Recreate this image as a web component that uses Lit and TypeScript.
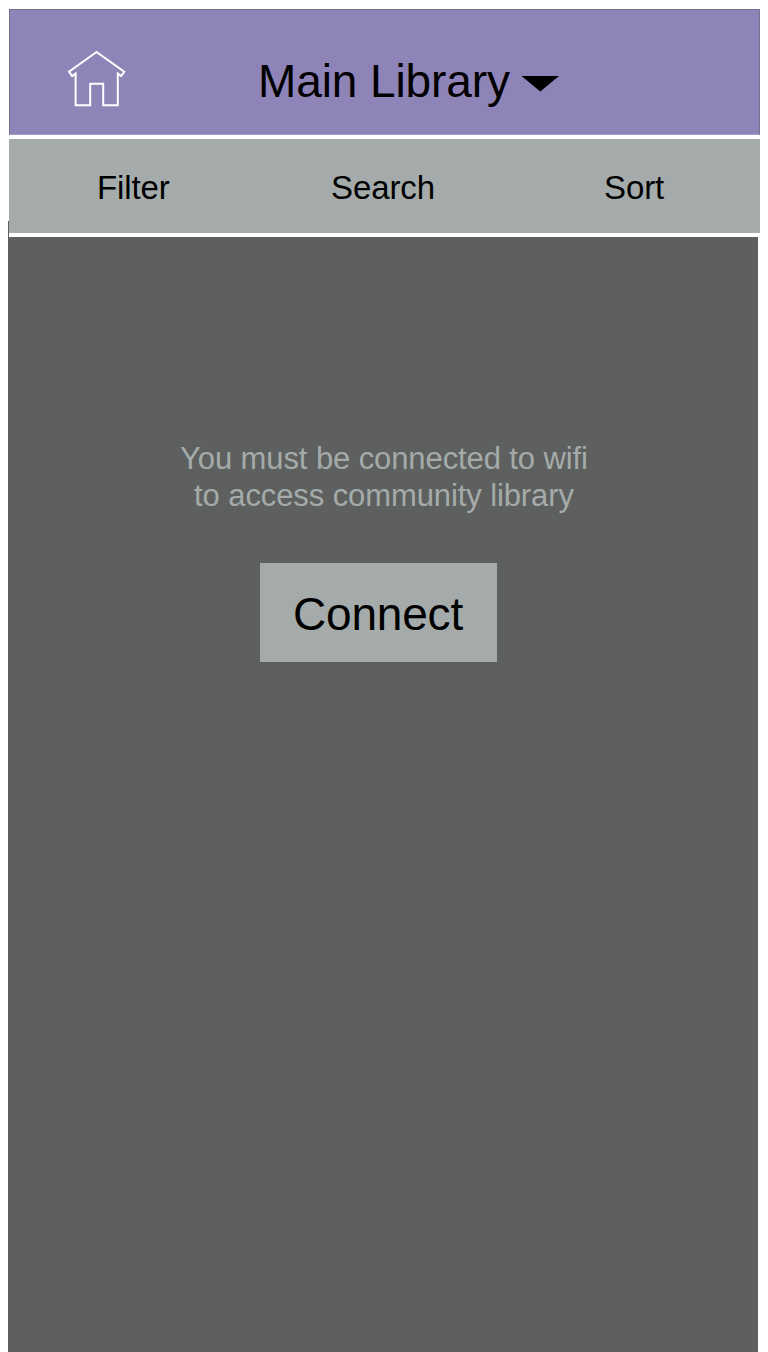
import { LitElement, html, css } from "lit";
import { customElement } from "lit/decorators.js";

@customElement("app-root")
export class AppRoot extends LitElement {
  static styles = css`
    :host {
      display: block;
      box-sizing: border-box;
      height: 1352px;
      padding-top: 9px;
      overflow: hidden;
      background: #fff;
      color: #000;
      font-family: "Liberation Sans", Arial, sans-serif;
    }
    .header {
      box-sizing: border-box;
      display: flex;
      width: 751px;
      height: 126px;
      margin-left: 9px;
      padding: 38px 0 0 57px;
      background: #8f84b7;
      border: 1px solid #77718f;
      border-bottom-color: #a69dc4;
    }
    .home {
      flex: none;
      width: 62px;
      height: 62px;
    }
    .title {
      display: flex;
      margin: 7px 0 0 129px;
      font-size: 46px;
      line-height: 53px;
      letter-spacing: -0.1px;
      white-space: nowrap;
    }
    .caret {
      width: 38px;
      height: 18px;
      margin: 20px 0 0 11px;
    }
    .toolbar {
      position: relative;
      z-index: 1;
      box-sizing: border-box;
      display: grid;
      grid-template-columns: 234px 273px 1fr;
      width: 751px;
      height: 102px;
      margin-left: 9px;
      padding-left: 88px;
      background: #a4abaa;
      border-top: 4px solid #fff;
      border-bottom: 4px solid #fff;
      font-size: 33px;
      line-height: 97px;
      letter-spacing: -0.1px;
    }
    .panel {
      display: flex;
      flex-direction: column;
      align-items: center;
      box-sizing: border-box;
      width: 750px;
      height: 1131px;
      margin: -16px 0 0 8px;
      padding-top: 219px;
      background: #5d605e;
    }
    .message {
      margin: 0;
      color: #a4abaa;
      font-size: 31px;
      line-height: 37px;
      letter-spacing: -0.1px;
      text-align: center;
      white-space: nowrap;
      padding-left: 2px;
    }
    .connect {
      width: 237px;
      height: 99px;
      margin: 49px 10px 0 0;
      padding: 0;
      border: 0;
      background: #a4abaa;
      color: #000;
      font: inherit;
      font-size: 46px;
      line-height: 103px;
      letter-spacing: -0.2px;
    }
  `;

  render() {
    return html`
      <header class="header">
        <svg class="home" viewBox="0 0 62 62" fill="none" stroke="#fff" stroke-width="2">
          <path d="M29.5 4 2 23.7l3.2 4.3 3.4-2.6v31.9h14.6V35.8h13v21.5h14.6V25.4l3.4 2.6 3-4.3z" />
        </svg>
        <div class="title">
          <span>Main Library</span>
          <svg class="caret" viewBox="0 0 38 18"><path d="M.5 1h37.5L19.3 16.5z" /></svg>
        </div>
      </header>
      <nav class="toolbar">
        <span>Filter</span>
        <span>Search</span>
        <span>Sort</span>
      </nav>
      <main class="panel">
        <p class="message">You must be connected to wifi<br />to access community library</p>
        <button class="connect">Connect</button>
      </main>
    `;
  }
}
